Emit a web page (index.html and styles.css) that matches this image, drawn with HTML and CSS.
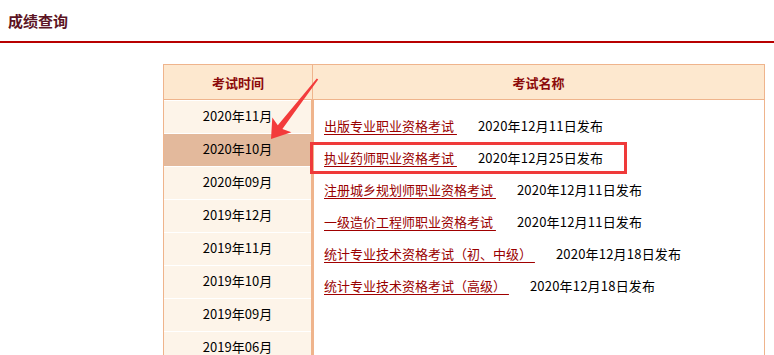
FILE: index.html
```html
<!DOCTYPE html>
<html lang="zh-CN">
<head>
<meta charset="utf-8">
<title>成绩查询</title>
<link rel="stylesheet" href="styles.css">
</head>
<body>
<div class="page">
  <div class="title">成绩查询</div>
  <div class="rule"></div>
  <div class="table">
    <div class="thead">
      <div class="th th-time">考试时间</div>
      <div class="th th-name">考试名称</div>
    </div>
    <div class="tbody">
      <ul class="months">
        <li>2020年11月</li>
        <li class="active">2020年10月</li>
        <li>2020年09月</li>
        <li>2019年12月</li>
        <li>2019年11月</li>
        <li>2019年10月</li>
        <li>2019年09月</li>
        <li>2019年06月</li>
      </ul>
      <ul class="exams">
        <li><a href="#">出版专业职业资格考试&nbsp;</a><span class="date">2020年12月11日发布</span></li>
        <li><a href="#">执业药师职业资格考试&nbsp;</a><span class="date">2020年12月25日发布</span></li>
        <li><a href="#">注册城乡规划师职业资格考试&nbsp;</a><span class="date">2020年12月11日发布</span></li>
        <li><a href="#">一级造价工程师职业资格考试&nbsp;</a><span class="date">2020年12月11日发布</span></li>
        <li><a href="#">统计专业技术资格考试（初、中级）&nbsp;</a><span class="date">2020年12月18日发布</span></li>
        <li><a href="#">统计专业技术资格考试（高级）&nbsp;</a><span class="date">2020年12月18日发布</span></li>
      </ul>
    </div>
  </div>
  <div class="highlight"></div>
  <svg class="arrow" width="774" height="355" viewBox="0 0 774 355">
    <polygon points="271,139 291.4,132.2 282.4,128.9 318.2,79.6 316.8,78.4 277.8,125.3 272.3,117.5" fill="#f33b3b"/>
  </svg>
</div>
</body>
</html>
```

FILE: styles.css
```css
html {
  overflow: hidden;
}
body {
  margin: 0;
  background: #ffffff;
  font-family: "Noto Sans CJK SC", "Liberation Sans", sans-serif;
  font-size: 13px;
  color: #000000;
}
.page {
  position: relative;
  width: 774px;
  height: 355px;
}
.title {
  height: 41px;
  display: flex;
  align-items: center;
  padding-left: 8px;
  font-size: 15px;
  font-weight: bold;
  color: #5c1424;
}
.rule {
  height: 2px;
  background: #b80000;
}
.table {
  margin: 21px 0 0 163px;
  width: 602px;
  box-sizing: border-box;
  border: 1px solid #efb48c;
}
.thead {
  display: flex;
  height: 35px;
  background: #fde8cf;
  border-bottom: 1px solid #efb48c;
  box-sizing: border-box;
}
.th {
  display: flex;
  align-items: center;
  justify-content: center;
  font-weight: bold;
  color: #8b0a0a;
}
.th-time {
  width: 149px;
  box-sizing: border-box;
  border-right: 1px solid #efb48c;
}
.th-name {
  flex: 1;
}
.tbody {
  display: flex;
}
.months {
  list-style: none;
  margin: 0;
  padding: 0;
  width: 150px;
  box-sizing: border-box;
  border-right: 3px solid #efb48c;
}
.months li {
  height: 33px;
  box-sizing: border-box;
  border-top: 1px solid #ffffff;
  padding-bottom: 3px;
  background: #fdf4e9;
  display: flex;
  align-items: center;
  justify-content: center;
}
.months li.active {
  background: #e3b99c;
}
.exams {
  list-style: none;
  margin: 0;
  padding: 10px 0 0 10px;
  flex: 1;
}
.exams li {
  height: 32px;
  line-height: 32px;
  white-space: nowrap;
}
.exams a {
  color: #990000;
  text-decoration: underline;
  text-decoration-color: #a00000;
  text-underline-offset: 3px;
}
.date {
  margin-left: 21px;
  letter-spacing: 0.2px;
}
.highlight {
  position: absolute;
  left: 310px;
  top: 142px;
  width: 317px;
  height: 32px;
  box-sizing: border-box;
  border: 3px solid #ef3a3a;
}
.arrow {
  position: absolute;
  left: 0;
  top: 0;
  pointer-events: none;
}
```
